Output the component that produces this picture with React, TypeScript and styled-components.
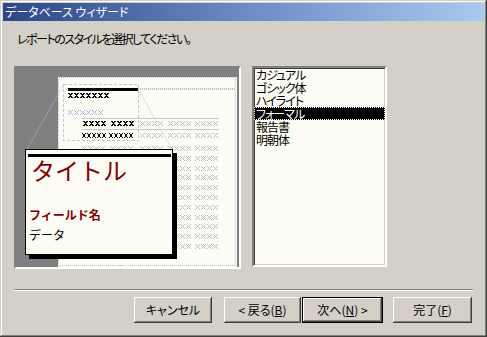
import React from 'react';
import styled, { createGlobalStyle, css } from 'styled-components';

const Global = createGlobalStyle`
  html, body { margin: 0; padding: 0; background: #d4d0c8; }
  body {
    font-family: "Noto Sans CJK JP", "Noto Sans", sans-serif;
    font-size: 12px;
    font-feature-settings: "palt";
  }
`;

const Window = styled.div`
  width: 487px;
  height: 337px;
  box-sizing: border-box;
  padding: 3px;
  background: #d4d0c8;
  box-shadow: inset -1px -1px #404040, inset 1px 1px #d4d0c8,
    inset -2px -2px #808080, inset 2px 2px #ffffff;
  display: flex;
  flex-direction: column;
`;

const TitleBar = styled.div`
  height: 18px;
  flex: none;
  display: flex;
  align-items: center;
  padding-left: 2px;
  color: #ffffff;
  font-size: 12px;
  line-height: 12px;
  background: linear-gradient(90deg, #2c4689 0%, #6a8bc4 50%, #a6caf0 100%);
`;

const Content = styled.div`
  display: flex;
  flex-direction: column;
  padding-left: 11px;
`;

const Prompt = styled.div`
  margin-top: 12px;
  padding-left: 3px;
  line-height: 12px;
  height: 12px;
  letter-spacing: -1.5px;
  color: #000;
`;

const MainRow = styled.div`
  margin-top: 21px;
  display: flex;
  align-items: flex-start;
  gap: 11px;
`;

const sunken = css`
  box-sizing: border-box;
  border-style: solid;
  border-width: 2px;
  border-color: #808080 #ffffff #ffffff #808080;
  box-shadow: inset 1px 1px #404040, inset -1px -1px #d4d0c8;
`;

const Preview = styled.div`
  ${sunken};
  position: relative;
  width: 227px;
  height: 203px;
  background: #808080;
  & > svg { display: block; }
`;

const Card = styled.div`
  position: absolute;
  left: 9px;
  top: 81px;
  width: 148px;
  height: 106px;
  box-sizing: border-box;
  border: 1px solid #000;
  background: #fcfcf4;
  box-shadow: 4px 4px 0 #000;
  padding: 4px 1px 0 2px;
  display: flex;
  flex-direction: column;
  font-feature-settings: normal;
`;

const CardBar = styled.div`
  height: 3px;
  background: #000;
`;

const CardTitle = styled.div`
  margin-top: 1px;
  padding-left: 3px;
  font-size: 24px;
  line-height: 24px;
  color: #800000;
`;

const FieldName = styled.div`
  margin-top: 27px;
  padding-left: 1px;
  font-size: 12px;
  line-height: 12px;
  font-weight: bold;
  color: #800000;
`;

const FieldData = styled.div`
  margin-top: 8px;
  padding-left: 1px;
  font-size: 12px;
  line-height: 12px;
  color: #000;
`;

const ListBox = styled.div`
  ${sunken};
  width: 135px;
  height: 201px;
  background: #fcfcf4;
  display: flex;
  flex-direction: column;
`;

const ListItem = styled.div<{ $selected?: boolean }>`
  height: 13px;
  line-height: 13px;
  padding-left: 2px;
  box-sizing: border-box;
  color: #000;
  letter-spacing: -1px;
  white-space: nowrap;
  ${(p) =>
    p.$selected &&
    css`
      background: #000;
      color: #fff;
      outline: 1px dotted #fff;
      outline-offset: -1px;
    `}
`;

const Separator = styled.div`
  margin-top: 20px;
  width: 459px;
  height: 0;
  border-top: 1px solid #808080;
  border-bottom: 1px solid #ffffff;
`;

const ButtonRow = styled.div`
  margin-top: 6px;
  display: flex;
  padding-left: 120px;
`;

const Button = styled.button<{ $default?: boolean; $gap: number; $w: number }>`
  box-sizing: border-box;
  margin-left: ${(p) => p.$gap}px;
  width: ${(p) => p.$w}px;
  height: 26px;
  padding: 0;
  border: none;
  background: #d4d0c8;
  color: #000;
  font-family: "Noto Sans CJK JP", "Noto Sans", sans-serif;
  font-size: 12px;
  font-feature-settings: "palt";
  line-height: 12px;
  white-space: pre;
  box-shadow: inset -1px -1px #404040, inset 1px 1px #ffffff,
    inset -2px -2px #808080, inset 2px 2px #d4d0c8;
  ${(p) =>
    p.$default &&
    css`
      box-shadow: inset 0 0 0 1px #000, inset -2px -2px #404040,
        inset 2px 2px #ffffff, inset -3px -3px #808080;
    `}
  & u { text-decoration: underline; text-underline-offset: 1px; }
`;

/* ---- preview drawing ---- */
type Run = { x: number; n: number; pitch: number; id: string; color: string };

const runUses = (y: number, r: Run, key: string) =>
  Array.from({ length: r.n }, (_, i) => (
    <use key={`${key}-${i}`} href={`#${r.id}`} x={r.x + i * r.pitch} y={y} fill={r.color} />
  ));

const GRAY = '#b9bdc8';
const BLUE = '#9db3da';

const thinPts = [
  [0, 0], [4, 0], [1, 1], [3, 1], [2, 2], [1, 3], [3, 3], [0, 4], [4, 4],
];
const boldPts = [
  [0, 0], [1, 0], [3, 0], [4, 0], [1, 1], [2, 1], [3, 1], [2, 2], [1, 3], [2, 3], [3, 3], [0, 4], [1, 4], [3, 4], [4, 4],
];
const narrowPts = [
  [0, 0], [3, 0], [1, 1], [2, 1], [1, 2], [2, 2], [1, 3], [2, 3], [0, 4], [3, 4],
];

const Glyph = ({ id, pts }: { id: string; pts: number[][] }) => (
  <g id={id}>
    {pts.map(([x, y], i) => (
      <rect key={i} x={x} y={y} width={1} height={1} />
    ))}
  </g>
);

const grayRight = (y: number, k: string) => [
  ...runUses(y, { x: 140, n: 4, pitch: 6, id: 'xt', color: GRAY }, `${k}a`),
  ...runUses(y, { x: 168, n: 4, pitch: 6, id: 'xt', color: GRAY }, `${k}b`),
  ...runUses(y, { x: 195, n: 4, pitch: 6, id: 'xt', color: GRAY }, `${k}c`),
];

const grayRows = [146, 156, 166, 175, 185, 195, 205, 215, 224, 234, 244];

const ReportDrawing = () => (
  <svg width={223} height={199} viewBox="16 68 223 199" shapeRendering="crispEdges">
    <defs>
      <Glyph id="xt" pts={thinPts} />
      <Glyph id="xb" pts={boldPts} />
      <Glyph id="xn" pts={narrowPts} />
    </defs>
    <rect x={16} y={68} width={223} height={199} fill="#808080" />
    <rect x={58} y={77} width={179} height={190} fill="#fcfcf4" />
    <rect x={58.5} y={77.5} width={177} height={188} fill="none" stroke="#b6c2d6" strokeDasharray="1 1" />
    {/* dashed title region */}
    <rect x={63.5} y={84.5} width={75} height={56} fill="none" stroke="#c6c6c6" strokeDasharray="3 2" />
    <rect x={68} y={88} width={70} height={3} fill="#000" />
    <line x1={138} y1={89} x2={236} y2={89} stroke="#b4bccc" strokeWidth={2} strokeDasharray="1 1" />
    {runUses(93, { x: 68, n: 7, pitch: 6, id: 'xb', color: '#000' }, 't')}
    {runUses(110, { x: 68, n: 6, pitch: 6, id: 'xt', color: BLUE }, 'bl')}
    <line x1={82} y1={118.5} x2={219} y2={118.5} stroke="#c8c8c8" />
    <line x1={82} y1={129.5} x2={219} y2={129.5} stroke="#c8c8c8" />
    {runUses(121, { x: 83, n: 4, pitch: 6, id: 'xb', color: '#000' }, 'r1a')}
    {runUses(121, { x: 111, n: 4, pitch: 6, id: 'xb', color: '#000' }, 'r1b')}
    {grayRight(121, 'r1')}
    {runUses(133, { x: 82, n: 5, pitch: 5, id: 'xn', color: '#000' }, 'r2a')}
    {runUses(133, { x: 109, n: 5, pitch: 5, id: 'xn', color: '#000' }, 'r2b')}
    {grayRight(133, 'r2')}
    {grayRows.map((y) => (
      <g key={y}>
        {runUses(y, { x: 82, n: 4, pitch: 6, id: 'xt', color: GRAY }, `g${y}a`)}
        {runUses(y, { x: 110, n: 4, pitch: 6, id: 'xt', color: GRAY }, `g${y}b`)}
        {grayRight(y, `g${y}`)}
      </g>
    ))}
    {/* guide lines toward the magnified card */}
    <line x1={64} y1={84} x2={26} y2={151} stroke="#a9bfe6" strokeDasharray="1 1" shapeRendering="auto" />
    <line x1={138} y1={89} x2={173} y2={151} stroke="#c4c4c4" strokeDasharray="1 1" shapeRendering="auto" />
  </svg>
);

const styles = ['カジュアル', 'ゴシック体', 'ハイライト', 'フォーマル', '報告書', '明朝体'];

export default function App() {
  return (
    <>
      <Global />
      <Window>
        <TitleBar>データベース ウィザード</TitleBar>
        <Content>
          <Prompt>レポートのスタイルを選択してください。</Prompt>
          <MainRow>
            <Preview>
              <ReportDrawing />
              <Card>
                <CardBar />
                <CardTitle>タイトル</CardTitle>
                <FieldName>フィールド名</FieldName>
                <FieldData>データ</FieldData>
              </Card>
            </Preview>
            <ListBox>
              {styles.map((s) => (
                <ListItem key={s} $selected={s === 'フォーマル'}>
                  {s}
                </ListItem>
              ))}
            </ListBox>
          </MainRow>
          <Separator />
          <ButtonRow>
            <Button $gap={0} $w={78}>キャンセル</Button>
            <Button $gap={12} $w={77}>&lt; 戻る(<u>B</u>)</Button>
            <Button $gap={1} $w={81} $default>
              次へ(<u>N</u>) &gt;
            </Button>
            <Button $gap={10} $w={79}>完了(<u>F</u>)</Button>
          </ButtonRow>
        </Content>
      </Window>
    </>
  );
}
